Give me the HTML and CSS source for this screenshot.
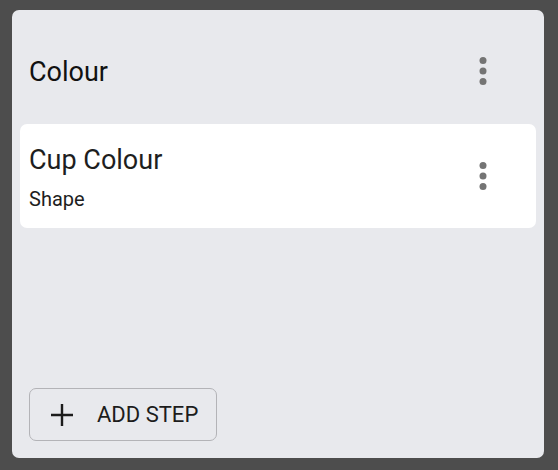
FILE: index.html
```html
<!DOCTYPE html>
<html>
<head>
<meta charset="utf-8">
<link rel="stylesheet" href="styles.css">
</head>
<body>
<div class="panel">
  <div class="header">
    <div class="title">Colour</div>
    <div class="menu">
      <svg width="8" height="30" viewBox="0 0 8 30"><circle cx="4" cy="4.5" r="3.5"/><circle cx="4" cy="15" r="3.5"/><circle cx="4" cy="25.5" r="3.5"/></svg>
    </div>
  </div>
  <div class="card">
    <div class="card-text">
      <div class="card-title">Cup Colour</div>
      <div class="card-sub">Shape</div>
    </div>
    <div class="menu">
      <svg width="8" height="30" viewBox="0 0 8 30"><circle cx="4" cy="4.5" r="3.5"/><circle cx="4" cy="15" r="3.5"/><circle cx="4" cy="25.5" r="3.5"/></svg>
    </div>
  </div>
  <button class="add-btn">
    <svg class="plus" width="22" height="22" viewBox="0 0 22 22"><path d="M11 0V22M0 11H22" stroke="#1c1c1c" stroke-width="2.4"/></svg>
    <span>ADD STEP</span>
  </button>
</div>
</body>
</html>
```
FILE: styles.css
```css
html, body {
  margin: 0;
  padding: 0;
  background: #4d4d4d;
}
body {
  width: 558px;
  height: 470px;
  padding: 10px 14px 12px 12px;
  box-sizing: border-box;
  font-family: Roboto, "Noto Sans", sans-serif;
}
.panel {
  width: 532px;
  height: 448px;
  box-sizing: border-box;
  background: #e8e9ed;
  border-radius: 7px;
  padding: 8px;
  display: flex;
  flex-direction: column;
}
.header {
  height: 106px;
  display: flex;
  align-items: center;
  justify-content: space-between;
  padding-left: 9px;
}
.title {
  font-size: 27px;
  line-height: 32px;
  color: #111;
  padding-top: 2px;
}
.menu {
  width: 48px;
  height: 48px;
  margin-right: 29px;
  display: flex;
  align-items: center;
  justify-content: center;
  fill: #747474;
}
.card {
  background: #fff;
  border-radius: 7px;
  height: 104px;
  box-sizing: border-box;
  display: flex;
  align-items: center;
  justify-content: space-between;
  padding-left: 9px;
}
.card-text {
  display: flex;
  flex-direction: column;
  padding-top: 2px;
}
.card-title {
  font-size: 27px;
  line-height: 32px;
  color: #1e1e1e;
}
.card-sub {
  font-size: 20px;
  line-height: 24px;
  margin-top: 11px;
  color: #1e1e1e;
}
.add-btn {
  margin-top: auto;
  margin-left: 9px;
  margin-bottom: 9px;
  width: 188px;
  height: 53px;
  box-sizing: border-box;
  border: 1.5px solid #b3b3b7;
  border-radius: 7px;
  background: transparent;
  display: flex;
  align-items: center;
  padding: 0 0 0 21px;
  font-family: Roboto, "Noto Sans", sans-serif;
  font-size: 22px;
  color: #1c1c1c;
  gap: 24px;
}
.plus {
  flex: none;
}
```
